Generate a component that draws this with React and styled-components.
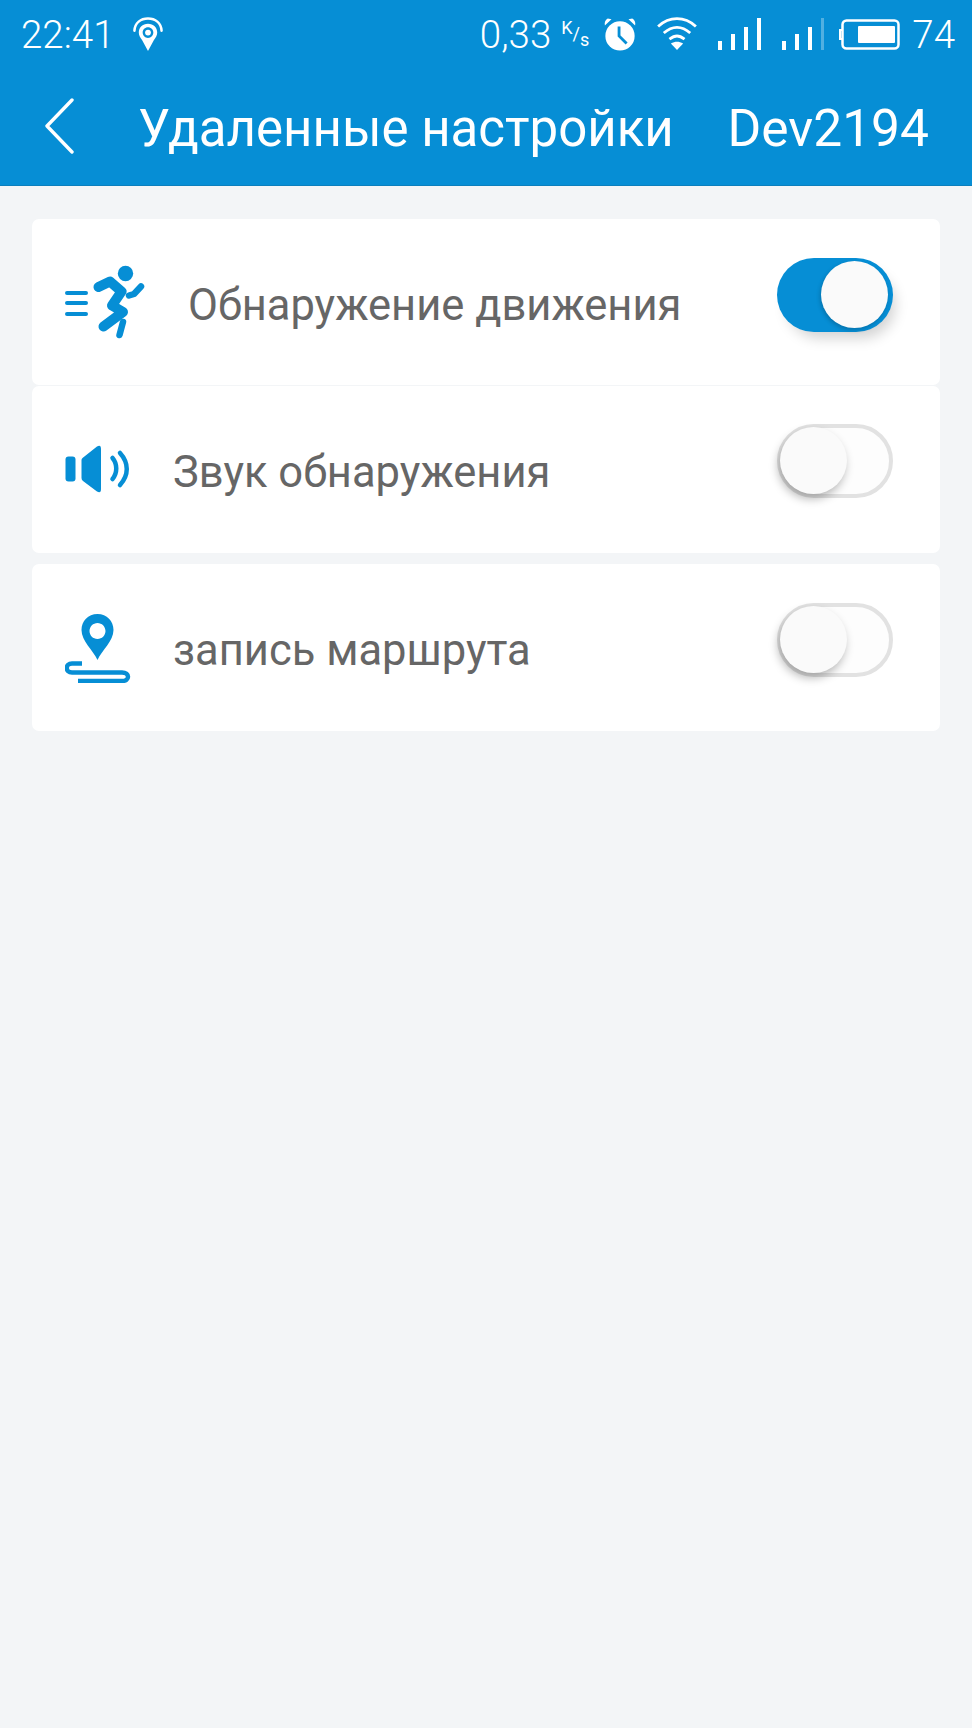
import styled, { createGlobalStyle } from 'styled-components';

const GlobalStyle = createGlobalStyle`
  html, body {
    margin: 0;
    padding: 0;
    background-color: #f3f5f7;
  }
  body {
    font-family: Roboto, "Noto Sans", sans-serif;
  }
`;

const Page = styled.div`
  width: 972px;
  height: 1728px;
  background-color: #f3f5f7;
  overflow: hidden;
`;

const Header = styled.header`
  height: 185px;
  background-color: #068ed5;
  border-bottom: 1px solid #0b7fbd;
  color: #fff;
`;

const StatusBar = styled.div`
  height: 66px;
  display: flex;
  align-items: center;
  padding: 2px 17px 0 21px;
  box-sizing: border-box;
  font-size: 38.5px;
  font-weight: 300;
`;

const StatusLeft = styled.div`
  display: flex;
  align-items: center;
  gap: 17px;
  flex: 1;
`;

const StatusRight = styled.div`
  display: flex;
  align-items: center;
`;

const Speed = styled.span`
  display: flex;
  align-items: center;
  margin-right: 16px;
`;

const SpeedUnit = styled.span`
  display: flex;
  width: 26px;
  margin-left: 10px;
  font-size: 18px;
  font-weight: 400;
  line-height: 1;
`;

const UnitPart = styled.span`
  transform: translateY(${(props) => props.$y}px);
`;

const StatusIcon = styled.svg`
  display: block;
  margin-right: ${(props) => props.$gap || 0}px;
`;

const Toolbar = styled.div`
  height: 119px;
  display: flex;
  align-items: center;
  padding: 0 43px 0 44px;
  font-size: 51px;
  font-weight: 400;
`;

const Title = styled.div`
  flex: 1;
  margin: 6px 0 0 64px;
  white-space: nowrap;
`;

const DeviceName = styled.span`
  font-size: 51.5px;
  margin-top: 6px;
`;

const Cards = styled.main`
  padding: 33px 32px 0;
  display: flex;
  flex-direction: column;
`;

const Card = styled.section`
  height: ${(props) => props.$height}px;
  margin-top: ${(props) => props.$top}px;
  background-color: #fff;
  border-radius: 7px;
  display: flex;
  align-items: center;
  padding: 0 47px 0 33px;
`;

const RowIcon = styled.svg`
  display: block;
  flex: none;
  margin-top: ${(props) => props.$shift || 0}px;
`;

const Label = styled.div`
  flex: 1;
  margin-left: ${(props) => props.$left}px;
  margin-top: 6px;
  font-size: 43.5px;
  color: #666;
  white-space: nowrap;
`;

const Track = styled.div`
  position: relative;
  box-sizing: border-box;
  flex: none;
  width: 116px;
  height: 74px;
  border-radius: 37px;
  margin-top: ${(props) => props.$shift}px;
  background-color: ${(props) => (props.$on ? '#068ed5' : '#fdfdfd')};
  border: ${(props) => (props.$on ? 'none' : '4px solid #e2e2e2')};
  box-shadow: ${(props) =>
    props.$on ? '6px 10px 14px -4px rgba(0, 0, 0, 0.18)' : 'none'};
`;

const Knob = styled.div`
  position: absolute;
  top: ${(props) => (props.$on ? 3 : -1)}px;
  left: ${(props) => (props.$on ? 44 : -1)}px;
  width: 67px;
  height: 67px;
  border-radius: 50%;
  background-color: #fafafa;
  box-shadow: ${(props) =>
    props.$on
      ? '-1px 2px 4px rgba(0, 0, 0, 0.2)'
      : '-2px 5px 10px rgba(0, 0, 0, 0.28)'};
`;

function LocationIcon() {
  return (
    <svg width="32" height="35" viewBox="0 0 33 36" fill="none">
      <path d="M2.500 14 C3 6 9 1.500 16.500 1.500 C24 1.500 30 6 30.500 14" stroke="#fff" strokeWidth="2.600" strokeLinecap="round" />
      <path fill="#fff" fillRule="evenodd" d="M16.500 7 C10.800 7 7 11 7 16 C7 19 8.500 21 10.500 24 L16.500 35 L22.500 24 C24.500 21 26 19 26 16 C26 11 22.200 7 16.500 7 Z M16.500 10.500 C19.600 10.500 22 13 22 16 C22 19 19.600 21.500 16.500 21.500 C13.400 21.500 11 19 11 16 C11 13 13.400 10.500 16.500 10.500 Z" />
      <circle cx="16.500" cy="16" r="3" fill="#fff" />
    </svg>
  );
}

function AlarmIcon() {
  return (
    <StatusIcon $gap={19} width="34" height="34" viewBox="0 0 36 36">
      <circle cx="18" cy="20" r="15.500" fill="#fff" />
      <path d="M2 9 L9 2.500 L5 1.500 Q1 4 2 9 Z M34 9 L27 2.500 L31 1.500 Q35 4 34 9 Z" fill="#fff" />
      <path d="M17 10 V20 L25 28" stroke="#068ed5" strokeWidth="3" fill="none" />
    </StatusIcon>
  );
}

function WifiIcon() {
  return (
    <StatusIcon $gap={20} width="42" height="34" viewBox="0 0 44 36" fill="none">
      <path d="M2 10 C14 -1 30 -1 42 10" stroke="#fff" strokeWidth="3" />
      <path d="M8 17 C17 9 27 9 36 17" stroke="#fff" strokeWidth="3" />
      <path d="M14 23.500 C20 19 24 19 30 23.500" stroke="#fff" strokeWidth="3" />
      <path d="M15.500 28 C20 25.500 24 25.500 28.500 28 L22 35 Z" fill="#fff" />
    </StatusIcon>
  );
}

function SignalIcon({ faded, gap }) {
  const bars = [
    [0, 24, 9],
    [13, 17, 16],
    [26, 10, 23],
    [39, 1, 32],
  ];
  return (
    <StatusIcon $gap={gap} width={faded ? 42 : 44} height="34" viewBox={`0 0 ${faded ? 42 : 44} 34`}>
      {bars.map(([x, y, h], i) => (
        <rect
          key={x}
          x={x}
          y={y}
          width={faded && i === 3 ? 3 : 4}
          height={h}
          fill="#fff"
          opacity={faded && i === 3 ? 0.3 : 1}
        />
      ))}
    </StatusIcon>
  );
}

function BatteryIcon() {
  return (
    <StatusIcon $gap={12} width="61" height="31" viewBox="0 0 61 31" fill="none">
      <path d="M3 11 H1 V20 H3" stroke="#fff" strokeWidth="2" />
      <rect x="3.500" y="1.500" width="56" height="28" rx="4" stroke="#fff" strokeWidth="2.500" />
      <rect x="19" y="7" width="37" height="17" rx="1" fill="#fff" />
    </StatusIcon>
  );
}

function BackIcon() {
  return (
    <svg width="30" height="56" viewBox="0 0 30 56" fill="none">
      <path d="M28 2 L3 28 L28 54" stroke="#fff" strokeWidth="3.400" strokeLinecap="round" strokeLinejoin="round" />
    </svg>
  );
}

function RunnerIcon() {
  return (
    <RowIcon $shift={-2} width="80" height="76" viewBox="0 0 80 76" fill="none">
      <path d="M2 30 H21 M2 40 H21 M2 51 H21" stroke="#068ed5" strokeWidth="4" strokeLinecap="round" />
      <circle cx="60.500" cy="10.500" r="7.700" fill="#068ed5" />
      <path d="M33.500 24 L45 18.500 L56.500 28.500 L47 42.500 L58 49 L38.500 63.500" stroke="#068ed5" strokeWidth="10" strokeLinecap="round" strokeLinejoin="round" />
      <path d="M64 32.500 L69 31 L76 23.500" stroke="#068ed5" strokeWidth="6.500" strokeLinecap="round" strokeLinejoin="round" />
      <path d="M58 59 L54.500 72" stroke="#068ed5" strokeWidth="6.500" strokeLinecap="round" />
    </RowIcon>
  );
}

function SpeakerIcon() {
  return (
    <RowIcon $shift={-2} width="66" height="48" viewBox="0 0 66 48" fill="none">
      <rect x="0.500" y="11.500" width="10" height="25" rx="3" fill="#068ed5" />
      <path d="M17.500 13 L32 1.500 Q36 -1 36 4 V44 Q36 49 32 46.500 L18 36 Q16.500 35 16.500 33 V15 Q16.500 14 17.500 13 Z" fill="#068ed5" />
      <path d="M47.500 13 C52.500 19 52.500 28 47.500 34" stroke="#068ed5" strokeWidth="4.500" strokeLinecap="round" />
      <path d="M55 8 C64 18 64 30 55 40" stroke="#068ed5" strokeWidth="4.500" strokeLinecap="round" />
    </RowIcon>
  );
}

function RouteIcon() {
  return (
    <RowIcon width="66" height="70" viewBox="0 0 66 70" fill="none">
      <path fill="#068ed5" fillRule="evenodd" d="M32.500 1 C23 1 16.500 8 16.500 17 C16.500 28 28 37 32.500 47 C37 37 48.500 28 48.500 17 C48.500 8 42 1 32.500 1 Z M32.500 10 C36.900 10 40.500 13.600 40.500 18 C40.500 22.400 36.900 26 32.500 26 C28.100 26 24.500 22.400 24.500 18 C24.500 13.600 28.100 10 32.500 10 Z" />
      <path d="M17 50.500 H7 C0 50.500 0 59.500 7 59.500 H57 C65 59.500 65 68 57 68 H13" stroke="#068ed5" strokeWidth="4.500" />
    </RowIcon>
  );
}

function Switch({ on, shift }) {
  return (
    <Track $on={on} $shift={shift}>
      <Knob $on={on} />
    </Track>
  );
}

function App() {
  return (
    <Page>
      <GlobalStyle />
      <Header>
        <StatusBar>
          <StatusLeft>
            <span>22:41</span>
            <LocationIcon />
          </StatusLeft>
          <StatusRight>
            <Speed>
              0,33
              <SpeedUnit>
                <UnitPart $y={-6}>K</UnitPart>
                <UnitPart $y={0}>/</UnitPart>
                <UnitPart $y={6}>s</UnitPart>
              </SpeedUnit>
            </Speed>
            <AlarmIcon />
            <WifiIcon />
            <SignalIcon gap={20} />
            <SignalIcon faded gap={15} />
            <BatteryIcon />
            <span>74</span>
          </StatusRight>
        </StatusBar>
        <Toolbar>
          <BackIcon />
          <Title>Удаленные настройки</Title>
          <DeviceName>Dev2194</DeviceName>
        </Toolbar>
      </Header>
      <Cards>
        <Card $height={166} $top={0}>
          <RunnerIcon />
          <Label $left={43}>Обнаружение движения</Label>
          <Switch on shift={-15} />
        </Card>
        <Card $height={167} $top={1}>
          <SpeakerIcon />
          <Label $left={42}>Звук обнаружения</Label>
          <Switch shift={-17} />
        </Card>
        <Card $height={167} $top={11}>
          <RouteIcon />
          <Label $left={42}>запись маршрута</Label>
          <Switch shift={-15} />
        </Card>
      </Cards>
    </Page>
  );
}

export default App;
